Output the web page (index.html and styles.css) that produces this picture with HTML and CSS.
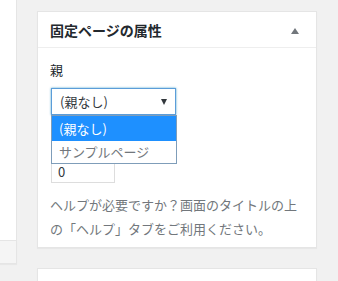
FILE: index.html
```
<!DOCTYPE html>
<html lang="ja">
<head>
  <meta charset="UTF-8">
  <title>固定ページの属性</title>
  <link rel="stylesheet" href="styles.css">
</head>
<body>
  <div class="wrap">
    <div class="main-col">
      <div class="main-box"></div>
      <div class="main-foot"></div>
    </div>
    <div class="side-col">
      <div class="postbox">
        <div class="postbox-head">
          <h2>固定ページの属性</h2>
          <span class="toggle"></span>
        </div>
        <div class="inside">
          <p class="label">親</p>
          <div class="select-wrap">
            <div class="select">(親なし)<span class="arrow"></span></div>
            <ul class="options">
              <li class="selected">(親なし)</li>
              <li>サンプルページ</li>
            </ul>
          </div>
          <div class="number">0</div>
          <p class="help">ヘルプが必要ですか？画面のタイトルの上の「ヘルプ」タブをご利用ください。</p>
        </div>
      </div>
      <div class="postbox next"></div>
    </div>
  </div>
</body>
</html>
```

FILE: styles.css
```
body {
  margin: 0;
  background: #f1f1f1;
  font-family: "Noto Sans CJK JP", "Noto Sans", sans-serif;
  color: #444;
  overflow: hidden;
}
.wrap { display: flex; align-items: flex-start; height: 281px; overflow: hidden; }
.main-col { width: 17px; }
.main-box { height: 240px; background: #fff; border-right: 1px solid #e5e5e5; border-bottom: 1px solid #e5e5e5; }
.main-foot {
  height: 22px; background: #f5f5f5;
  border-right: 1px solid #e5e5e5; border-bottom: 1px solid #e5e5e5;
  box-shadow: 0 1px 1px rgba(0,0,0,.04);
}
.side-col { margin-left: 20px; width: 280px; padding-top: 11px; }
.postbox {
  background: #fff; border: 1px solid #e5e5e5;
  box-shadow: 0 1px 1px rgba(0,0,0,.04);
}
.postbox.next { margin-top: 20px; height: 20px; }
.postbox-head {
  display: flex; align-items: center; justify-content: space-between;
  height: 35px; padding: 0 12px; border-bottom: 1px solid #eee;
}
.postbox-head h2 { margin: 0; font-size: 14px; font-weight: bold; color: #23282d; }
.toggle {
  width: 0; height: 0; margin-right: 5px; margin-top: 2px;
  border-left: 4px solid transparent; border-right: 4px solid transparent;
  border-bottom: 6px solid #72777c;
}
.inside { padding: 13px 12px 6px; font-size: 13px; }
.label { margin: 0 0 9px; font-size: 13px; color: #23282d; line-height: 18px; }
.select-wrap { position: relative; width: 126px; }
.select {
  display: flex; align-items: center; justify-content: space-between;
  height: 25px; padding: 0 8px 0 8px; margin-left: 1px;
  border: 1px solid #5b9dd9; box-shadow: 0 0 2px rgba(30,140,190,.8);
  color: #32373c; background: #fff;
}
.arrow {
  width: 0; height: 0;
  border-left: 3.5px solid transparent; border-right: 3.5px solid transparent;
  border-top: 6px solid #32373c;
}
.options {
  position: absolute; left: 1px; top: 27px; width: 124px;
  margin: 0; padding: 0; list-style: none; background: #fff;
  border: 1px solid #7f9db9; z-index: 2;
}
.options li { height: 22px; line-height: 22px; padding-left: 7px; color: #72777c; }
.options li.selected { height: 25px; line-height: 25px; background: #1e90ff; color: #fff; }
.number {
  width: 50px; height: 20px; margin: 46px 0 0 1px; padding: 0 6px;
  border: 1px solid #ddd; line-height: 20px; color: #32373c;
}
.help { margin: 10px 0 0; line-height: 24px; color: #72777c; }
```
